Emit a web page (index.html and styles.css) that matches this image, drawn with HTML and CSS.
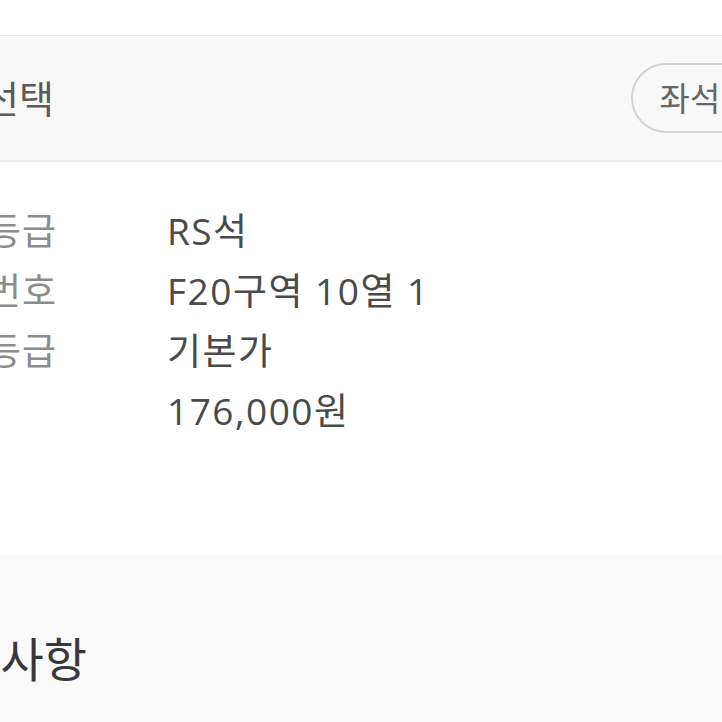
FILE: index.html
```html
<!DOCTYPE html>
<html lang="ko">
<head>
<meta charset="utf-8">
<title>좌석 선택</title>
<link rel="stylesheet" href="styles.css">
</head>
<body>
<div class="page">
  <div class="top-space"></div>
  <section class="seat-bar">
    <h2 class="seat-title">좌석선택</h2>
    <button class="seat-btn">좌석변경</button>
  </section>
  <section class="seat-info">
    <div class="row"><span class="label">좌석등급</span><span class="value">RS석</span></div>
    <div class="row"><span class="label">좌석번호</span><span class="value">F20구역 10열 1</span></div>
    <div class="row"><span class="label">가격등급</span><span class="value">기본가</span></div>
    <div class="row"><span class="label"></span><span class="value">176,000원</span></div>
  </section>
  <section class="notice">
    <h2 class="notice-title">유의사항</h2>
  </section>
</div>
</body>
</html>
```

FILE: styles.css
```css
* { box-sizing: border-box; }
html, body {
  margin: 0;
  padding: 0;
  background: #ffffff;
  overflow: hidden;
}
body {
  font-family: "Open Sans", "Noto Sans CJK KR", sans-serif;
  width: 722px;
  height: 722px;
}
.page {
  display: flex;
  flex-direction: column;
  height: 722px;
}
.top-space {
  height: 35px;
  flex-shrink: 0;
}
.seat-bar {
  flex-shrink: 0;
  height: 127px;
  background: #f8f8f8;
  border-top: 1px solid #e6e6e6;
  border-bottom: 2px solid #ebebeb;
  display: flex;
  align-items: center;
}
.seat-title {
  margin: 0 0 0 -86px;
  font-size: 38px;
  font-weight: 400;
  color: #5a5a5a;
  line-height: 1;
  white-space: nowrap;
}
.seat-btn {
  margin-left: auto;
  margin-right: -87px;
  flex-shrink: 0;
  height: 70px;
  padding: 0 26px 0 27px;
  border: 2px solid #d2d2d2;
  border-radius: 35px;
  background: #f8f8f8;
  font-family: inherit;
  font-size: 33px;
  color: #666666;
  line-height: 1;
  white-space: nowrap;
}
.seat-info {
  flex-shrink: 0;
  height: 393px;
  padding-top: 38px;
  margin-left: -83px;
}
.row {
  display: flex;
  height: 60px;
  align-items: center;
  font-size: 37px;
  line-height: 1;
}
.label {
  width: 250px;
  flex-shrink: 0;
  color: #8c8c8c;
  letter-spacing: 1px;
  white-space: nowrap;
}
.value {
  color: #4a4a4a;
  letter-spacing: 1.5px;
  white-space: nowrap;
}
.notice {
  flex: 1;
  background: #f9f9f9;
  padding-top: 81px;
}
.notice-title {
  margin: 0 0 0 -86px;
  font-size: 47px;
  font-weight: 400;
  color: #383838;
  line-height: 1;
  white-space: nowrap;
}
```
